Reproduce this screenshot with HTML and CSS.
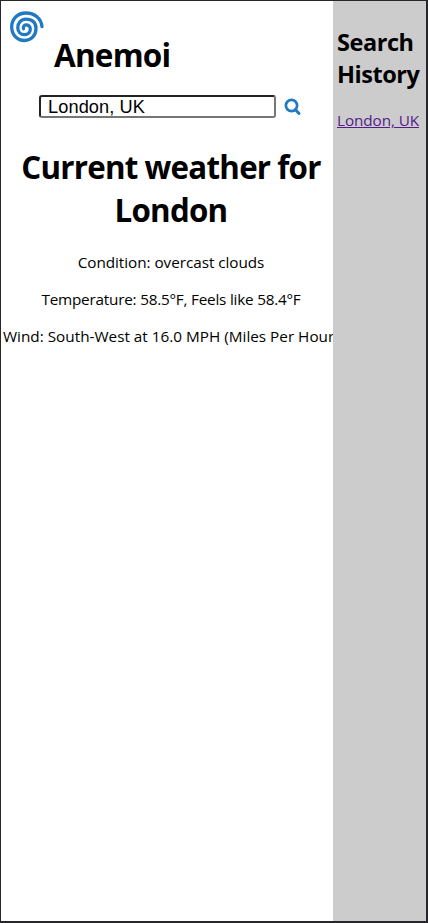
FILE: index.html
```html
<!DOCTYPE html>
<html lang="en">
<head>
<meta charset="utf-8">
<title>Anemoi</title>
<link rel="stylesheet" href="styles.css">
</head>
<body>
<div class="app">
  <main class="main">
    <header class="header">
      <svg class="logo" viewBox="0 0 36 34" fill="none" stroke="#2079c3" stroke-width="3.3" stroke-linecap="round">
        <path d="M34 17.700C33.300 9.500 26.500 4 18 4C9.500 4 3.700 10 3.700 18C3.700 26 9.500 31.500 16.500 31.500C23.500 31.500 28 26 28 19.500C28 13.500 24 10.200 18 10.200C13 10.200 9.800 14 9.800 18.700C9.800 23 12.800 25.700 16.600 25.700C20.300 25.700 22.300 22.800 22.300 20C22.300 17.200 20 15.800 18 15.900C16 16 15 17.800 15.500 19.700"/>
      </svg>
      <h1 class="brand">Anemoi</h1>
    </header>
    <form class="search">
      <input class="search-input" type="text" value="London, UK" aria-label="City">
      <svg class="search-icon" viewBox="0 0 18 18" fill="none" stroke="#2079c3">
        <circle cx="7.500" cy="7.500" r="5.600" stroke-width="2.700"/>
        <path d="M11.500 11.700L15 15.500" stroke-width="3" stroke-linecap="round"/>
      </svg>
    </form>
    <section class="weather">
      <h1 class="title">Current weather for London</h1>
      <p class="condition">Condition: overcast clouds</p>
      <p class="temperature">Temperature: 58.5°F, Feels like 58.4°F</p>
      <p class="wind">Wind: South-West at 16.0 MPH (Miles Per Hour)</p>
    </section>
  </main>
  <aside class="history">
    <h2 class="history-title">Search History</h2>
    <a class="history-link" href="#">London, UK</a>
  </aside>
</div>
</body>
</html>
```
FILE: styles.css
```css
* { box-sizing: border-box; }
body {
  margin: 0;
  color: #000;
  font: 400 15.3px/21px "Open Sans", "Noto Sans", sans-serif;
}
h1, h2, p { margin: 0; }
.app {
  display: flex;
  height: 923px;
  border: solid #27272b;
  border-width: 1px 2px 2px 1px;
  overflow: hidden;
}
.main {
  width: 332px;
  flex: none;
  overflow: hidden;
  background: #fff;
}
.header {
  display: flex;
  height: 94px;
  padding: 8px 0 0 7px;
}
.logo { width: 36px; height: 34px; flex: none; }
.brand {
  margin: 24px 0 0 10px;
  font-size: 31.5px;
  line-height: 43px;
  font-weight: 700;
  letter-spacing: -0.8px;
}
.search {
  display: flex;
  height: 23px;
  padding-left: 38px;
}
.search-input {
  width: 237px;
  height: 23px;
  padding: 2px 7px 0;
  border: 2px solid;
  border-color: #222 #767676 #767676 #222;
  border-radius: 3px;
  color: #000;
  background: #fff;
  font: 18.2px/19px "Liberation Sans", Arial, sans-serif;
  letter-spacing: 0.1px;
  outline: none;
}
.search-icon { width: 18px; height: 18px; margin: 3px 0 0 8px; }
.weather {
  width: 340px;
  padding-top: 28px;
  text-align: center;
  white-space: nowrap;
}
.title {
  width: 320px;
  margin: 0 auto 20px;
  font-size: 31.3px;
  line-height: 43px;
  font-weight: 700;
  letter-spacing: -0.75px;
  word-spacing: -0.5px;
  white-space: normal;
}
.weather p { margin-bottom: 16px; letter-spacing: -0.22px; }
.weather .condition { letter-spacing: -0.05px; }
.weather .wind {
  padding-left: 2px;
  text-align: left;
  letter-spacing: 0;
}
.history {
  flex: 1;
  min-width: 0;
  padding: 25px 4px 0;
  background: #ccc;
}
.history-title {
  margin-bottom: 20px;
  font-size: 23.5px;
  line-height: 32px;
  font-weight: 700;
  letter-spacing: -0.45px;
}
.history-link { color: #551a8b; white-space: nowrap; letter-spacing: -0.1px; }
```
